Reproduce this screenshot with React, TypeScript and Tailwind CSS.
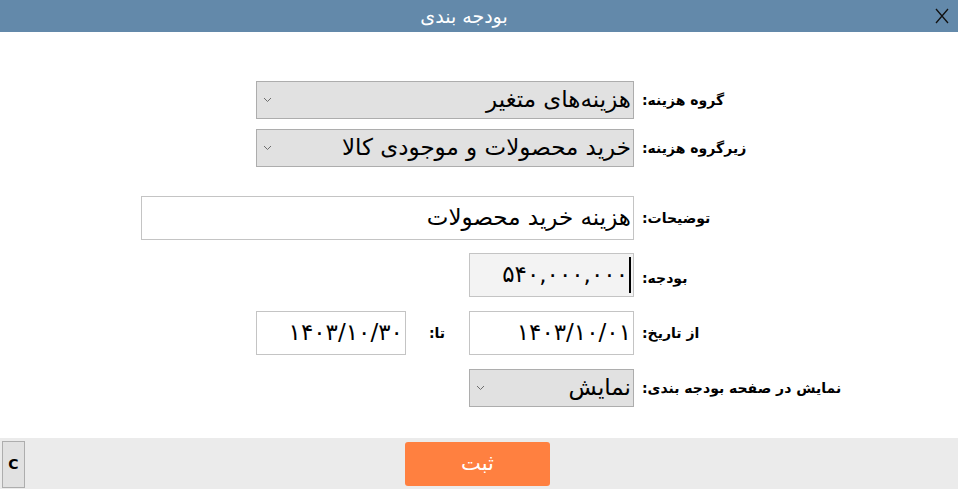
import React from "react";

const font = { fontFamily: '"DejaVu Sans", sans-serif' };

const Chevron = () => (
  <svg width="9" height="6" viewBox="0 0 9 6" className="shrink-0">
    <path d="M1 1 L4.5 4.5 L8 1" fill="none" stroke="#6d6d6d" strokeWidth="1" />
  </svg>
);

type SelectProps = { value: string; width: string };

const SelectBox = ({ value, width }: SelectProps) => (
  <div
    className={`${width} h-[38px] flex items-center justify-between border border-[#adadad] bg-[#e1e1e1] pl-[6px] pr-[2px]`}
  >
    <Chevron />
    <span dir="rtl" className="text-[23px] text-black leading-none pb-[2px]">
      {value}
    </span>
  </div>
);

type InputProps = { value: string; width: string; bg?: string; caret?: boolean };

const TextBox = ({ value, width, bg = "bg-white", caret }: InputProps) => (
  <div
    className={`${width} h-[44px] flex items-center justify-end border border-[#c4c4c4] ${bg} pr-[2px]`}
  >
    <span dir="rtl" className="text-[23px] text-black leading-none pb-[2px]">
      {value}
    </span>
    {caret && <div className="ml-[1px] w-[2px] h-[36px] bg-black" />}
  </div>
);

const Label = ({ children }: { children: React.ReactNode }) => (
  <span dir="rtl" className="ml-[8px] text-[14px] font-bold text-black">
    {children}
  </span>
);

export default function App() {
  return (
    <div className="w-[958px] h-[489px] flex flex-col bg-white overflow-hidden" style={font}>
      <div className="h-[32px] flex items-center bg-[#6389aa] shrink-0">
        <div className="flex-1 text-center text-white text-[19px] pl-[2px]" dir="rtl">
          بودجه بندی
        </div>
        <div className="w-[32px] flex justify-center items-center">
          <svg width="16" height="16" viewBox="0 0 16 16">
            <path d="M2 1 L14 15 M14 1 L2 15" stroke="#111" strokeWidth="1.3" />
          </svg>
        </div>
      </div>

      <div className="flex-1 flex flex-col pt-[49px]">
        <div className="flex items-center">
          <div className="w-[634px] flex justify-end">
            <SelectBox value="هزینه‌های متغیر" width="w-[378px]" />
          </div>
          <Label>گروه هزینه:</Label>
        </div>

        <div className="flex items-center mt-[10px]">
          <div className="w-[634px] flex justify-end">
            <SelectBox value="خرید محصولات و موجودی کالا" width="w-[378px]" />
          </div>
          <Label>زیرگروه هزینه:</Label>
        </div>

        <div className="flex items-center mt-[29px]">
          <div className="w-[634px] flex justify-end">
            <TextBox value="هزینه خرید محصولات" width="w-[493px]" />
          </div>
          <Label>توضیحات:</Label>
        </div>

        <div className="flex items-center mt-[13px]">
          <div className="w-[634px] flex justify-end">
            <TextBox value="۵۴۰,۰۰۰,۰۰۰" width="w-[165px]" bg="bg-[#f3f3f3]" caret />
          </div>
          <span className="pt-[6px]">
            <Label>بودجه:</Label>
          </span>
        </div>

        <div className="flex items-center mt-[14px]">
          <div className="w-[634px] flex justify-end items-center">
            <TextBox value="۱۴۰۳/۱۰/۳۰" width="w-[150px]" />
            <span dir="rtl" className="ml-[23px] mr-[24px] text-[14px] font-bold text-black">
              تا:
            </span>
            <TextBox value="۱۴۰۳/۱۰/۰۱" width="w-[165px]" />
          </div>
          <Label>از تاریخ:</Label>
        </div>

        <div className="flex items-center mt-[14px]">
          <div className="w-[634px] flex justify-end">
            <SelectBox value="نمایش" width="w-[165px]" />
          </div>
          <Label>نمایش در صفحه بودجه بندی:</Label>
        </div>
      </div>

      <div className="h-[51px] shrink-0 bg-[#ebebeb] grid grid-cols-[1fr_auto_1fr] items-center">
        <div className="flex">
          <button className="ml-[2px] w-[23px] h-[47px] mt-[2px] border border-[#adadad] bg-[#e1e1e1] text-[14px] font-bold text-black">
            C
          </button>
        </div>
        <button
          dir="rtl"
          className="w-[145px] h-[44px] rounded-[3px] bg-[#ff8040] text-white text-[21px] mr-[3px]"
        >
          ثبت
        </button>
        <div />
      </div>
    </div>
  );
}
